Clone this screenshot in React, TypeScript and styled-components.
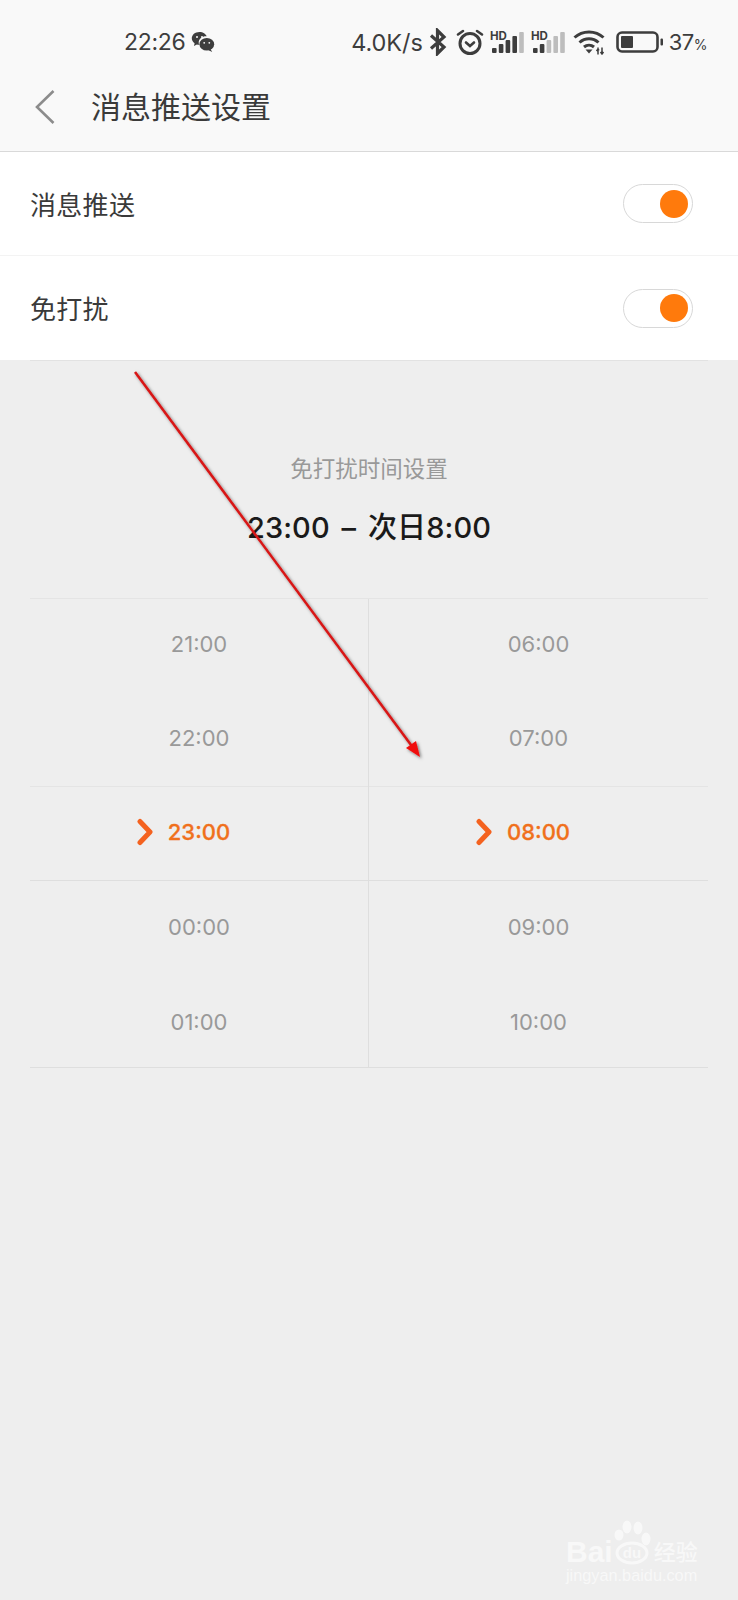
import styled, { createGlobalStyle } from "styled-components";

const GlobalStyle = createGlobalStyle`
  html, body {
    margin: 0;
    padding: 0;
    background: #eeeeee;
    font-family: Inter, "Noto Sans CJK SC", sans-serif;
  }
`;

const Page = styled.div`
  position: relative;
  width: 738px;
  height: 1600px;
  overflow: hidden;
  background: #eeeeee;
`;

const Header = styled.header`
  height: 152px;
  box-sizing: border-box;
  background: #f9f9f9;
  border-bottom: 1px solid #d9d9d9;
  display: flex;
  flex-direction: column;
`;

const StatusBar = styled.div`
  height: 84px;
  display: flex;
  align-items: center;
  justify-content: space-between;
  padding: 0 31px 0 124px;
  color: #3d3d3d;
  font-size: 22px;
`;

const StatusGroup = styled.div<{ $gap?: number }>`
  display: flex;
  align-items: center;
  gap: ${({ $gap }) => $gap ?? 6}px;
`;

const StatusTime = styled.span`
  font-size: 23px;
  letter-spacing: -0.3px;
`;

const Speed = styled.span`
  font-size: 23.5px;
  letter-spacing: -0.1px;
`;

const IconSlot = styled.span<{ $left: number }>`
  display: flex;
  margin-left: ${({ $left }) => $left - 6}px;
`;

const Percent = styled.span`
  margin-left: -1px;
  letter-spacing: -0.5px;
`;

const PercentSign = styled.small`
  font-size: 14px;
`;

const NavBar = styled.div`
  height: 46px;
  display: flex;
  align-items: center;
  padding-left: 35px;
  color: #3a3a3a;
  font-size: 30px;
`;

const NavTitle = styled.span`
  margin: -4px 0 0 36px;
`;

const SettingsList = styled.section`
  background: #ffffff;
`;

const SettingRow = styled.div<{ $last?: boolean }>`
  height: 104px;
  box-sizing: border-box;
  display: flex;
  align-items: center;
  justify-content: space-between;
  padding: 0 45px 0 30px;
  font-size: 26px;
  color: #3a3a3a;
  border-bottom: ${({ $last }) => ($last ? "0" : "1px solid #f3f3f3")};
`;

const RowLabel = styled.span`
  letter-spacing: 0.3px;
  margin-top: -1px;
`;

const Toggle = styled.div`
  width: 70px;
  height: 39px;
  box-sizing: border-box;
  border: 1px solid #d8d8d8;
  border-radius: 20px;
  background: #ffffff;
  display: flex;
  align-items: center;
  justify-content: flex-end;
  padding-right: 4px;
`;

const Knob = styled.span`
  width: 28px;
  height: 28px;
  border-radius: 50%;
  background: #ff7a0c;
`;

const ScheduleSection = styled.section`
  margin: 0 30px;
  border-top: 1px solid #e2e2e2;
`;

const ScheduleHead = styled.div`
  height: 237px;
  display: flex;
  flex-direction: column;
  align-items: center;
  padding-top: 93px;
  box-sizing: border-box;
`;

const ScheduleLabel = styled.div`
  font-size: 22.5px;
  line-height: 30px;
  color: #999999;
`;

const ScheduleValue = styled.div`
  margin-top: 24px;
  font-size: 29px;
  line-height: 40px;
  font-weight: 500;
  color: #1a1a1a;
  word-spacing: 4px;
  letter-spacing: 0.1px;
`;

const Picker = styled.div`
  display: grid;
  grid-template-columns: 339px 339px;
  border-top: 1px solid #e4e4e4;
  border-bottom: 1px solid #dedede;
`;

const PickerColumn = styled.div<{ $first?: boolean }>`
  display: flex;
  flex-direction: column;
  border-right: ${({ $first }) => ($first ? "1px solid #dedede" : "0")};
`;

// offset nudges the label inside its cell, negative moves it up
const PickerCell = styled.div<{ $active?: boolean; $height: number; $offset: number }>`
  height: ${({ $height }) => $height}px;
  box-sizing: border-box;
  padding: ${({ $offset }) => Math.max($offset, 0)}px 0 ${({ $offset }) => Math.max(-$offset, 0)}px;
  display: flex;
  align-items: center;
  justify-content: center;
  font-size: 22px;
  color: ${({ $active }) => ($active ? "#f0701c" : "#999999")};
  font-weight: ${({ $active }) => ($active ? 500 : 400)};
  -webkit-text-stroke: ${({ $active }) => ($active ? "0.3px" : "0")};
  ${({ $active }) =>
    $active ? "border-top: 1px solid #e4e4e4; border-bottom: 1px solid #dedede;" : ""}
`;

const CellLabel = styled.span`
  position: relative;
`;

const CellMarker = styled.svg`
  position: absolute;
  left: -32px;
  top: 50%;
  margin-top: -14px;
  width: 20px;
  height: 28px;
`;

const ArrowOverlay = styled.svg`
  position: absolute;
  left: 0;
  top: 0;
  width: 738px;
  height: 800px;
  pointer-events: none;
`;

const Watermark = styled.div`
  position: absolute;
  left: 566px;
  top: 1518px;
  width: 140px;
  color: rgba(255, 255, 255, 0.6);
  font-family: "Liberation Sans", "Noto Sans CJK SC", sans-serif;
`;

const WatermarkBrand = styled.div`
  display: flex;
  align-items: flex-end;
  height: 49px;
  font-size: 30px;
  font-weight: 700;
  line-height: 30px;
`;

const WatermarkCn = styled.span`
  font-size: 22px;
  font-weight: 500;
  line-height: 28px;
  margin-left: 41px;
`;

const WatermarkUrl = styled.div`
  font-size: 16.3px;
  line-height: 20px;
  margin-top: -2px;
  white-space: nowrap;
`;

const PawIcon = styled.svg`
  position: absolute;
  left: 48px;
  top: 2px;
  width: 40px;
  height: 46px;
`;

const WeChatIcon = () => (
  <svg width="24" height="22" viewBox="0 0 24 22">
    <path
      fill="#3d3d3d"
      d="M8.5 1C4 1 .8 3.900.8 7.300c0 2 1.100 3.700 2.800 4.900L3 15l2.900-1.600c.7.200 1.400.3 2.200.3-.3-.7-.4-1.400-.4-2.100 0-3.700 3.400-6.300 7.500-6.300h.5C14.900 3 12 1 8.500 1z"
    />
    <ellipse cx="15.800" cy="13.300" rx="7.400" ry="6.300" fill="#3d3d3d" />
    <path fill="#3d3d3d" d="M19.500 18l1.700 3-3.600-1.800z" />
    <circle cx="6" cy="6" r="1" fill="#f9f9f9" />
    <circle cx="11" cy="6" r="1" fill="#f9f9f9" />
    <circle cx="13.200" cy="11.800" r=".9" fill="#f9f9f9" />
    <circle cx="18.300" cy="11.800" r=".9" fill="#f9f9f9" />
  </svg>
);

const BluetoothIcon = () => (
  <svg width="18" height="28" viewBox="0 0 18 28">
    <path
      fill="none"
      stroke="#3d3d3d"
      strokeWidth="3.200"
      d="M2 7.500l13 11.500-6.500 6.500V2.500L15 9 2 20.500"
    />
  </svg>
);

const AlarmIcon = () => (
  <svg width="28" height="28" viewBox="0 0 28 28">
    <circle cx="14" cy="15.500" r="10" fill="none" stroke="#3d3d3d" strokeWidth="3" />
    <path
      fill="none"
      stroke="#3d3d3d"
      strokeWidth="2.600"
      strokeLinecap="round"
      d="M2 6.500l5-3.500M26 6.500l-5-3.500M10 14.500l4 3.500 4-3.500"
    />
  </svg>
);

const barHeights = [5, 9, 13, 17, 21];

const SignalIcon = ({ active }: { active: number }) => (
  <svg width="36" height="28" viewBox="0 0 36 28">
    <text x="0" y="12" fontSize="11.500" fontWeight="700" fill="#3d3d3d" fontFamily="Inter, sans-serif">
      HD
    </text>
    {barHeights.map((height, bar) => (
      <rect
        key={bar}
        x={2 + bar * 6.8}
        y={25 - height}
        width="4.600"
        height={height}
        rx="1"
        fill={bar < active ? "#3d3d3d" : "#bdbdbd"}
      />
    ))}
  </svg>
);

const WifiIcon = () => (
  <svg width="34" height="26" viewBox="0 0 34 26">
    <path
      fill="none"
      stroke="#3d3d3d"
      strokeWidth="3"
      d="M1.500 8.500C9.500 1 22.500 1 30.500 8.500M6.500 13.500c5.500-5 13.500-5 19 0M11 18c3-2.500 7-2.500 10 0"
    />
    <path fill="#3d3d3d" d="M12.500 20.500h7L16 24.500z" />
    <path
      fill="none"
      stroke="#3d3d3d"
      strokeWidth="1.500"
      d="M25 18.500v7M29 18.500v7M23.500 22l1.500-2 1 1.500M27.500 23l1.500 2 1.500-2"
    />
  </svg>
);

const BatteryIcon = () => (
  <svg width="48" height="24" viewBox="0 0 48 24">
    <rect x="1.500" y="2.500" width="40" height="19" rx="4.500" fill="none" stroke="#3d3d3d" strokeWidth="2.600" />
    <rect x="5" y="6" width="12" height="12" rx="1" fill="#3d3d3d" />
    <rect x="44.500" y="8.500" width="2.500" height="7" rx="1" fill="#3d3d3d" />
  </svg>
);

const BackIcon = () => (
  <svg width="20" height="34" viewBox="0 0 20 34">
    <path fill="none" stroke="#8c8c8c" strokeWidth="2.600" d="M18.500 1L2 17l16.500 16" />
  </svg>
);

const startTimes = ["21:00", "22:00", "23:00", "00:00", "01:00"];
const endTimes = ["06:00", "07:00", "08:00", "09:00", "10:00"];
const cellHeights = [93.5, 93.5, 95, 93, 93];
const cellOffsets = [-4, -2, -3, -2, 3];

const TimeColumn = ({ times, first }: { times: string[]; first?: boolean }) => (
  <PickerColumn $first={first}>
    {times.map((time, idx) => (
      <PickerCell key={time} $active={idx === 2} $height={cellHeights[idx]} $offset={cellOffsets[idx]}>
        <CellLabel>
          {idx === 2 && (
            <CellMarker viewBox="0 0 20 28">
              <path
                fill="none"
                stroke="#f4621f"
                strokeWidth="5"
                strokeLinecap="round"
                strokeLinejoin="round"
                d="M4 3.500l10 10.500L4 24.500"
              />
            </CellMarker>
          )}
          {time}
        </CellLabel>
      </PickerCell>
    ))}
  </PickerColumn>
);

export default function App() {
  return (
    <Page>
      <GlobalStyle />
      <Header>
        <StatusBar>
          <StatusGroup>
            <StatusTime>22:26</StatusTime>
            <WeChatIcon />
          </StatusGroup>
          <StatusGroup>
            <Speed>4.0K/s</Speed>
            <BluetoothIcon />
            <IconSlot $left={9}>
              <AlarmIcon />
            </IconSlot>
            <SignalIcon active={4} />
            <IconSlot $left={5}>
              <SignalIcon active={2} />
            </IconSlot>
            <IconSlot $left={6}>
              <WifiIcon />
            </IconSlot>
            <IconSlot $left={9}>
              <BatteryIcon />
            </IconSlot>
            <Percent>
              37<PercentSign>%</PercentSign>
            </Percent>
          </StatusGroup>
        </StatusBar>
        <NavBar>
          <BackIcon />
          <NavTitle>消息推送设置</NavTitle>
        </NavBar>
      </Header>
      <SettingsList>
        <SettingRow>
          <RowLabel>消息推送</RowLabel>
          <Toggle>
            <Knob />
          </Toggle>
        </SettingRow>
        <SettingRow $last>
          <RowLabel>免打扰</RowLabel>
          <Toggle>
            <Knob />
          </Toggle>
        </SettingRow>
      </SettingsList>
      <ScheduleSection>
        <ScheduleHead>
          <ScheduleLabel>免打扰时间设置</ScheduleLabel>
          <ScheduleValue>23:00 – 次日8:00</ScheduleValue>
        </ScheduleHead>
        <Picker>
          <TimeColumn times={startTimes} first />
          <TimeColumn times={endTimes} />
        </Picker>
      </ScheduleSection>
      <ArrowOverlay viewBox="0 0 738 800">
        <defs>
          <filter id="arrow-shadow" x="-10%" y="-10%" width="120%" height="120%">
            <feDropShadow dx="1.500" dy="1.500" stdDeviation="1.500" floodColor="#000" floodOpacity="0.5" />
          </filter>
        </defs>
        <g filter="url(#arrow-shadow)">
          <path d="M135 372L414 749" stroke="#d81414" strokeWidth="2.500" fill="none" />
          <path d="M420 757L406 748L416 741z" fill="#f00f0f" />
        </g>
      </ArrowOverlay>
      <Watermark>
        <PawIcon viewBox="0 0 40 46">
          <ellipse cx="5" cy="15" rx="4.500" ry="5.500" fill="rgba(255,255,255,.6)" />
          <ellipse cx="13" cy="7" rx="4.500" ry="6.500" fill="rgba(255,255,255,.6)" />
          <ellipse cx="24" cy="8" rx="4.500" ry="6.500" fill="rgba(255,255,255,.6)" />
          <ellipse cx="32" cy="19" rx="4.500" ry="6.500" fill="rgba(255,255,255,.6)" />
          <ellipse cx="18" cy="33" rx="15" ry="10" fill="none" stroke="rgba(255,255,255,.6)" strokeWidth="3" />
          <text x="18" y="38" fontSize="15" fontWeight="700" textAnchor="middle" fill="rgba(255,255,255,.6)" fontFamily="Liberation Sans, sans-serif">
            du
          </text>
        </PawIcon>
        <WatermarkBrand>
          Bai
          <WatermarkCn>经验</WatermarkCn>
        </WatermarkBrand>
        <WatermarkUrl>jingyan.baidu.com</WatermarkUrl>
      </Watermark>
    </Page>
  );
}
